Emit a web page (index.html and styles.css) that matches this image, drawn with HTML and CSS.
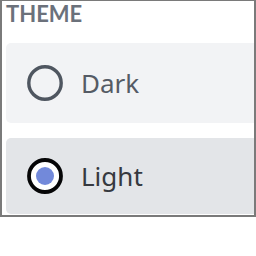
FILE: index.html
```html
<!DOCTYPE html>
<html lang="en">
<head>
    <meta charset="UTF-8">
    <meta name="viewport" content="width=device-width, initial-scale=1.0">
    <title>Theme</title>
    <link rel="stylesheet" href="styles.css">
</head>
<body>
    <div class="frame">
        <h2 class="section-title">Theme</h2>
        <div class="option">
            <svg class="radio" viewBox="0 0 36 36">
                <circle cx="18" cy="18" r="16.2" fill="none" stroke="#4f5660" stroke-width="3.4"/>
            </svg>
            <span class="option-label">Dark</span>
        </div>
        <div class="option selected">
            <svg class="radio" viewBox="0 0 36 36">
                <circle cx="18" cy="18" r="16" fill="#fff" stroke="#060607" stroke-width="3.8"/>
                <circle cx="18" cy="18" r="9" fill="#7289da"/>
            </svg>
            <span class="option-label">Light</span>
        </div>
    </div>
</body>
</html>
```

FILE: styles.css
```css
body {
    margin: 0;
    background: #fff;
    font-family: "Noto Sans", "Open Sans", sans-serif;
}
.frame {
    box-sizing: border-box;
    width: 256px;
    height: 217px;
    border: 2px solid #7a7a7a;
    border-top-width: 1px;
    padding: 0 0 0 4px;
}
.section-title {
    margin: 0 0 16px 0;
    font-family: Lato, "Noto Sans", sans-serif;
    font-size: 22px;
    line-height: 26px;
    font-weight: 700;
    text-transform: uppercase;
    color: #6b717b;
}
.option {
    display: flex;
    align-items: center;
    height: 80px;
    padding-left: 21px;
    box-sizing: border-box;
    border-radius: 5px 0 0 5px;
    background: #f2f3f5;
    margin-bottom: 15px;
}
.option.selected {
    height: 76px;
    background: #e3e5e8;
}
.radio {
    width: 36px;
    height: 36px;
    flex-shrink: 0;
}
.option-label {
    margin-left: 18px;
    font-size: 26px;
    color: #555b65;
}
.selected .option-label {
    color: #36393f;
}
```
